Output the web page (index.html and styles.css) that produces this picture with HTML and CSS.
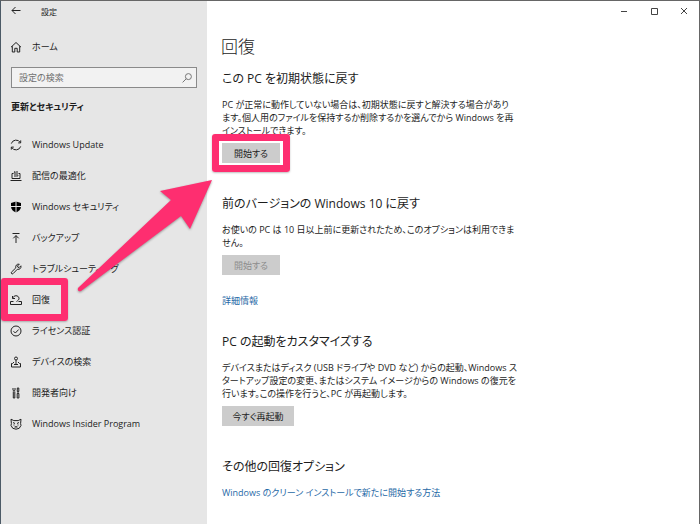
FILE: index.html
```html
<!DOCTYPE html>
<html lang="ja">
<head>
  <meta charset="UTF-8" />
  <meta name="viewport" content="width=device-width, initial-scale=1.0"/>
  <title>設定</title>
  <link rel="stylesheet" href="styles.css">
</head>
<body>
  <div class="window">
    <aside class="sidebar">
      <div class="titlebar">
        <button class="icon-btn back" aria-label="戻る">
          <svg class="icon" viewBox="0 0 12 12"><path d="M10.5 5.500H2M5.500 2 2 5.500 5.500 9"/></svg>
        </button>
        <span class="app-name">設定</span>
      </div>

      <a class="nav-link home" href="#">
        <svg class="icon" viewBox="0 0 12 12"><path d="M1 6.2 6 1.5l5 4.7M2.3 5.2V11h2.5V7.3h2.4V11h2.5V5.2"/></svg>
        <span>ホーム</span>
      </a>

      <form class="search">
        <input type="text" placeholder="設定の検索" aria-label="設定の検索">
        <svg class="icon" viewBox="0 0 12 12"><circle cx="7.4" cy="4.6" r="3"/><path d="M5.2 6.8 1.6 10.4"/></svg>
      </form>

      <h2 class="group">更新とセキュリティ</h2>

      <nav>
        <a class="nav-link" href="#">
          <svg class="icon" viewBox="0 0 12 12"><path d="M1.3 4.6A5 5 0 0 1 10.4 3.6M10.7 1.4v2.5H8.2M10.7 7.4A5 5 0 0 1 1.6 8.4M1.3 10.6V8.1h2.5"/></svg>
          <span>Windows Update</span>
        </a>
        <a class="nav-link" href="#">
          <svg class="icon" viewBox="0 0 12 12"><path d="M.5 10.5h11M2 8.5h8M3.500 3.500H2v5M8.500 3.500H10v5M5 7V1.500M3.800 2.700 5 1.500M7 1v5.500M8.200 5.300 7 6.500"/></svg>
          <span>配信の最適化</span>
        </a>
        <a class="nav-link" href="#">
          <svg class="icon" viewBox="0 0 12 12"><path class="solid" d="M6 .5 11 2V5.500C11 8.500 8.800 10.600 6 11.500 3.200 10.600 1 8.500 1 5.500V2z"/><path class="cut" d="M6 0v12M0 5.500h12"/></svg>
          <span>Windows セキュリティ</span>
        </a>
        <a class="nav-link" href="#">
          <svg class="icon" viewBox="0 0 12 12"><path d="M2.500 1.500h7M6 11V3.600M3.300 6.300 6 3.600l2.700 2.700"/></svg>
          <span>バックアップ</span>
        </a>
        <a class="nav-link" href="#">
          <svg class="icon" viewBox="0 0 12 12"><path d="M9.300 1.200 7.500 3l.4 1.200 1.200.4 1.800-1.800C11.500 5 9.800 6.800 7.300 6.300L3 10.700c-1 .8-2.300-.5-1.600-1.500L5.800 4.900C5.200 2.500 7.100.600 9.300 1.200z"/></svg>
          <span>トラブルシューティング</span>
        </a>
        <a class="nav-link marked" href="#">
          <svg class="icon" viewBox="0 0 12 12"><path d="M3.500 7.500h-3v3h11v-3H8.500M2.500 2v2.500H5M2.700 4.300C3.500 1 8.500.8 9 4.200c.2 1.500-1 2.300-2.500 3.300"/></svg>
          <span>回復</span>
        </a>
        <a class="nav-link" href="#">
          <svg class="icon" viewBox="0 0 12 12"><circle cx="6" cy="6" r="5"/><path d="M3.500 6.200 5.300 8l3.400-3.500"/></svg>
          <span>ライセンス認証</span>
        </a>
        <a class="nav-link" href="#">
          <svg class="icon" viewBox="0 0 12 12"><circle cx="6" cy="2.500" r="1.500"/><path d="M6 4v4.500M4 6 2.500 7.500H1.500v3.500h9V7.500h-1L8 6M4 8.500h4"/></svg>
          <span>デバイスの検索</span>
        </a>
        <a class="nav-link" href="#">
          <svg class="icon" viewBox="0 0 12 12"><path d="M3 1v2.300l1 .9 1-.9V1M3.300 4.500V11h1.500V4.500M7.300 1h1.500v3.500H7.300zM8 4.500v2M7.200 6.500h1.700V11H7.200z"/></svg>
          <span>開発者向け</span>
        </a>
        <a class="nav-link" href="#">
          <svg class="icon" viewBox="0 0 12 12"><path d="M1 1.200 3.800 2.600h4.400L11 1.200l-.4 4.300.4 2-1.800 2.800L6 11.200 2.800 10.300 1 7.500l.4-2zM3 4.500l2 1M9 4.500l-2 1M3.500 7h1M7.500 7h1M4.500 9h3M6 8v1"/></svg>
          <span>Windows Insider Program</span>
        </a>
      </nav>
    </aside>

    <main class="content">
      <div class="titlebar controls">
        <button class="icon-btn" aria-label="最小化">
          <svg class="icon" viewBox="0 0 12 12"><path d="M3 6.500h6"/></svg>
        </button>
        <button class="icon-btn" aria-label="最大化">
          <svg class="icon" viewBox="0 0 12 12"><path d="M3.500 3.500h6v6h-6z"/></svg>
        </button>
        <button class="icon-btn" aria-label="閉じる">
          <svg class="icon" viewBox="0 0 12 12"><path d="m3 3 6 6M9 3 3 9"/></svg>
        </button>
      </div>

      <h1>回復</h1>

      <section>
        <h2>この PC を初期状態に戻す</h2>
        <p>PC が正常に動作していない場合は、初期状態に戻すと解決する場合があり<br>ます。個人用のファイルを保持するか削除するかを選んでから Windows を再<br>インストールできます。</p>
        <div class="action marked">
          <button class="btn">開始する</button>
        </div>
      </section>

      <section>
        <h2>前のバージョンの Windows 10 に戻す</h2>
        <p>お使いの PC は 10 日以上前に更新されたため、このオプションは利用できま<br>せん。</p>
        <div class="action">
          <button class="btn" disabled>開始する</button>
        </div>
        <a class="link more" href="#">詳細情報</a>
      </section>

      <section>
        <h2>PC の起動をカスタマイズする</h2>
        <p>デバイスまたはディスク (USB ドライブや DVD など) からの起動、Windows ス<br>タートアップ設定の変更、またはシステム イメージからの Windows の復元を<br>行います。この操作を行うと、PC が再起動します。</p>
        <div class="action">
          <button class="btn wide">今すぐ再起動</button>
        </div>
      </section>

      <section>
        <h2>その他の回復オプション</h2>
        <a class="link" href="#">Windows のクリーン インストールで新たに開始する方法</a>
      </section>
    </main>

    <!-- Arrow from the menu item to the start button -->
    <svg class="arrow" viewBox="0 0 140 120">
      <path d="M135 3 83 14l11 9L1 111q-1 4 3 3L104 39l9 13z"/>
    </svg>
  </div>
</body>
</html>
```

FILE: styles.css
```css
*,
*::after {
  box-sizing: border-box;
  margin: 0;
  padding: 0;
}

body {
  font-family: "Open Sans", "Noto Sans CJK JP", sans-serif;
  font-feature-settings: "palt";
  font-size: 9px;
  line-height: 13px;
  color: #1c1c1c;
}

.window {
  position: relative;
  display: grid;
  grid-template-columns: 206px 1fr;
  min-height: 100vh;
  border: 1px solid #666;
  border-left-color: #4c5a66;
  background: #fff;
}

.sidebar {
  background: #e6e6e6;
}

.titlebar {
  display: flex;
  align-items: center;
  height: 20px;
}

.icon {
  flex: none;
  width: 12px;
  height: 12px;
  fill: none;
  stroke: #222;
  stroke-width: 1;
}

.icon .solid {
  fill: #000;
  stroke: none;
}

.icon .cut {
  stroke: #e6e6e6;
}

.icon-btn {
  display: flex;
  align-items: center;
  justify-content: center;
  width: 30px;
  height: 20px;
  border: none;
  background: none;
}

.app-name {
  margin-left: 10px;
  font-size: 8px;
}

.nav-link {
  position: relative;
  display: flex;
  align-items: center;
  gap: 10px;
  height: 31px;
  padding-left: 9px;
  color: inherit;
  text-decoration: none;
  white-space: nowrap;
}

.home {
  margin-top: 10px;
}

.search {
  display: flex;
  align-items: center;
  height: 21px;
  margin: 5px 10px 0;
  padding: 0 3px 0 7px;
  border: 1px solid #8a8a8a;
  background: #f2f2f2;
}

.search input {
  flex: 1;
  min-width: 0;
  border: none;
  outline: none;
  background: none;
  font: inherit;
}

.search input::placeholder {
  color: #707070;
}

.search .icon {
  stroke: #777;
}

.group {
  margin: 9px 10px 12px;
  font-size: 9px;
  line-height: 20px;
}

/* Main column */
.content {
  min-width: 0;
}

.controls {
  justify-content: flex-end;
}

.controls .icon {
  stroke: #444;
}

h1 {
  margin: 13px 14px 9px;
  font-size: 17px;
  font-weight: 300;
  line-height: 26px;
}

section {
  margin: 0 15px 24px;
}

section h2 {
  margin-bottom: 9px;
  font-size: 12px;
  font-weight: 400;
  line-height: 20px;
}

.action {
  position: relative;
  width: fit-content;
  margin-top: 6px;
}

.btn {
  display: block;
  width: 58px;
  height: 20px;
  border: none;
  background: #ccc;
  color: #1c1c1c;
  font: inherit;
  font-feature-settings: inherit;
}

.btn.wide {
  width: 72px;
}

.btn:disabled {
  color: #8c8c8c;
}

/* Extra room below a button that closes its section */
.action:last-child {
  margin-bottom: 31px;
}

.link {
  display: block;
  line-height: 14px;
  color: #1f69a6;
  text-decoration: none;
}

.more {
  margin-top: 19px;
}

/* Pink callouts */
.marked::after {
  content: "";
  position: absolute;
  border: 7px solid #fe2e70;
  border-radius: 3px;
  box-shadow: 0 1px 2px rgba(0, 0, 0, 0.25);
}

.nav-link.marked::after {
  top: -6px;
  left: 0;
  width: 67px;
  height: 43px;
}

.action.marked::after {
  inset: -9px -10px;
}

.arrow {
  position: absolute;
  top: 176px;
  left: 76px;
  width: 140px;
  height: 120px;
  fill: #fe2e70;
  filter: drop-shadow(0 1px 1px rgba(0, 0, 0, 0.35));
  pointer-events: none;
}
```
